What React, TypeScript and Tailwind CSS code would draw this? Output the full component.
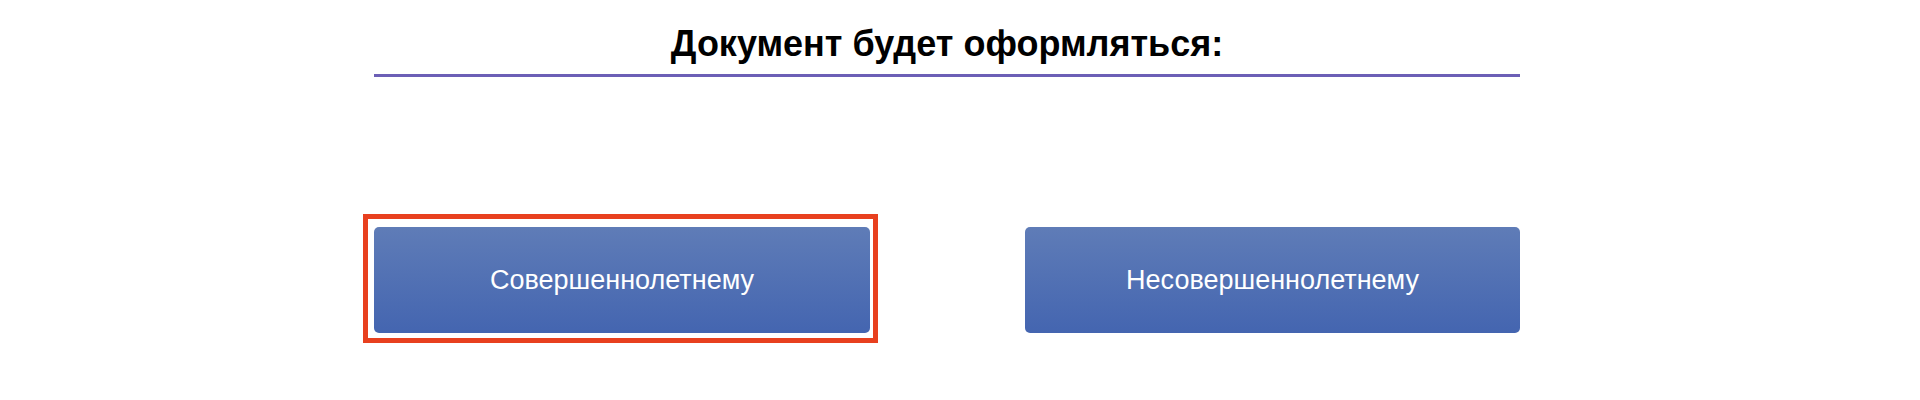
export default function App() {
  return (
    <div className="w-[1920px] h-[400px] bg-white font-['Liberation_Sans',Arial,sans-serif]">
      <div className="ml-[374px] w-[1146px] pt-[23px]">
        {/* Heading */}
        <h2 className="text-center text-[36px] leading-[41px] font-bold text-black">
          Документ будет оформляться:
        </h2>
        <div className="mt-[10px] h-[3px] bg-[#6c5fb6]" />

        {/* Choices */}
        <div className="mt-[150px] flex items-start justify-between">
          <div className="-ml-[11px] -mt-[13px] border-[5px] border-[#e8401f] pt-[8px] pl-[6px] pr-[3px] pb-[5px]">
            <button className="w-[496px] h-[106px] rounded-[5px] bg-linear-to-b from-[#5f7cb7] to-[#4465b0] text-[27px] text-white">
              Совершеннолетнему
            </button>
          </div>
          <button className="w-[495px] h-[106px] rounded-[5px] bg-linear-to-b from-[#5f7cb7] to-[#4465b0] text-[27px] text-white">
            Несовершеннолетнему
          </button>
        </div>
      </div>
    </div>
  );
}
